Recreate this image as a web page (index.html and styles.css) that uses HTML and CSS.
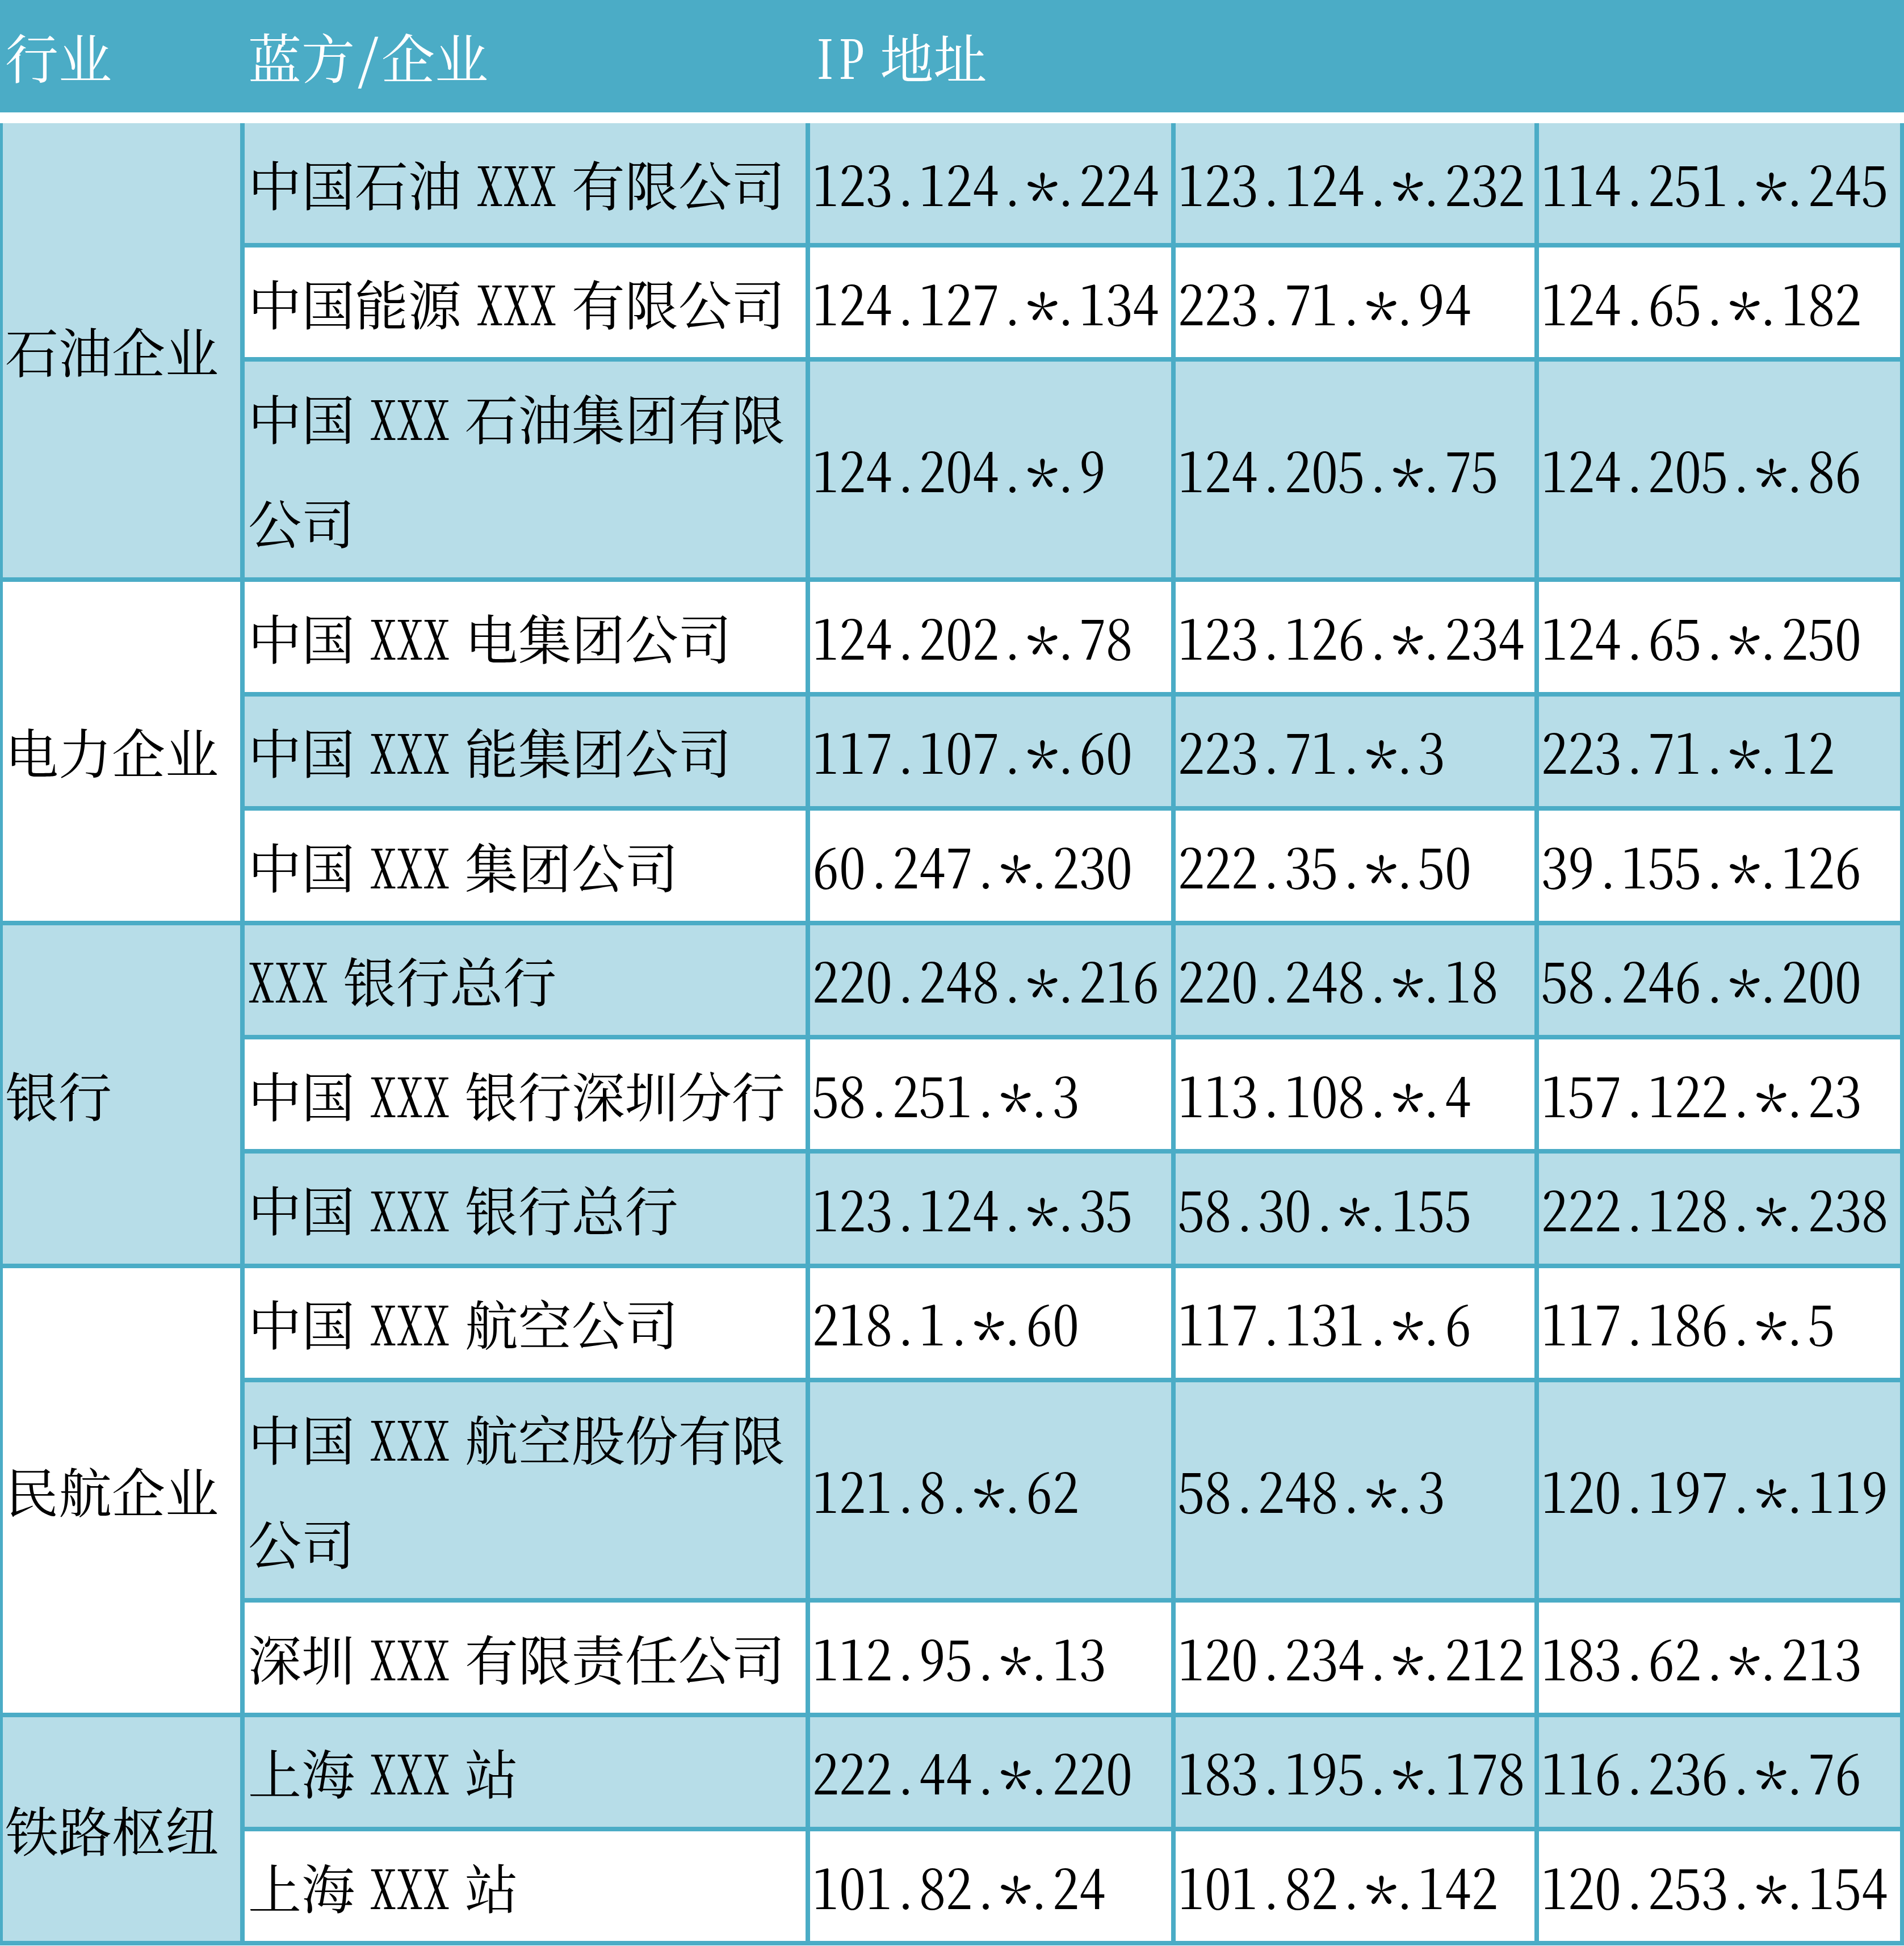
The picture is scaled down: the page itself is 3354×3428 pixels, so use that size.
FILE: index.html
```html
<!DOCTYPE html>
<html lang="zh-CN">
<head>
<meta charset="utf-8">
<title>IP 地址表</title>
<link rel="stylesheet" href="styles.css">
</head>
<body>
<div class="head">
  <div class="hcell">行业</div>
  <div class="hcell co-h">蓝方/企业</div>
  <div class="hcell ip-h">IP 地址</div>
</div>
<div class="sheet">
  <div class="cell grp tint span3">石油企业</div>
  <div class="cell co tint">中国石油 XXX 有限公司</div>
  <div class="cell ip tint"><span>123.124.<span class="star">*</span>.224</span></div>
  <div class="cell ip tint"><span>123.124.<span class="star">*</span>.232</span></div>
  <div class="cell ip tint"><span>114.251.<span class="star">*</span>.245</span></div>

  <div class="cell co">中国能源 XXX 有限公司</div>
  <div class="cell ip"><span>124.127.<span class="star">*</span>.134</span></div>
  <div class="cell ip"><span>223.71.<span class="star">*</span>.94</span></div>
  <div class="cell ip"><span>124.65.<span class="star">*</span>.182</span></div>

  <div class="cell co tint">中国 XXX 石油集团有限<br>公司</div>
  <div class="cell ip tint"><span>124.204.<span class="star">*</span>.9</span></div>
  <div class="cell ip tint"><span>124.205.<span class="star">*</span>.75</span></div>
  <div class="cell ip tint"><span>124.205.<span class="star">*</span>.86</span></div>

  <div class="cell grp span3">电力企业</div>
  <div class="cell co">中国 XXX 电集团公司</div>
  <div class="cell ip"><span>124.202.<span class="star">*</span>.78</span></div>
  <div class="cell ip"><span>123.126.<span class="star">*</span>.234</span></div>
  <div class="cell ip"><span>124.65.<span class="star">*</span>.250</span></div>

  <div class="cell co tint">中国 XXX 能集团公司</div>
  <div class="cell ip tint"><span>117.107.<span class="star">*</span>.60</span></div>
  <div class="cell ip tint"><span>223.71.<span class="star">*</span>.3</span></div>
  <div class="cell ip tint"><span>223.71.<span class="star">*</span>.12</span></div>

  <div class="cell co">中国 XXX 集团公司</div>
  <div class="cell ip"><span>60.247.<span class="star">*</span>.230</span></div>
  <div class="cell ip"><span>222.35.<span class="star">*</span>.50</span></div>
  <div class="cell ip"><span>39.155.<span class="star">*</span>.126</span></div>

  <div class="cell grp tint span3">银行</div>
  <div class="cell co tint">XXX 银行总行</div>
  <div class="cell ip tint"><span>220.248.<span class="star">*</span>.216</span></div>
  <div class="cell ip tint"><span>220.248.<span class="star">*</span>.18</span></div>
  <div class="cell ip tint"><span>58.246.<span class="star">*</span>.200</span></div>

  <div class="cell co">中国 XXX 银行深圳分行</div>
  <div class="cell ip"><span>58.251.<span class="star">*</span>.3</span></div>
  <div class="cell ip"><span>113.108.<span class="star">*</span>.4</span></div>
  <div class="cell ip"><span>157.122.<span class="star">*</span>.23</span></div>

  <div class="cell co tint">中国 XXX 银行总行</div>
  <div class="cell ip tint"><span>123.124.<span class="star">*</span>.35</span></div>
  <div class="cell ip tint"><span>58.30.<span class="star">*</span>.155</span></div>
  <div class="cell ip tint"><span>222.128.<span class="star">*</span>.238</span></div>

  <div class="cell grp span3">民航企业</div>
  <div class="cell co">中国 XXX 航空公司</div>
  <div class="cell ip"><span>218.1.<span class="star">*</span>.60</span></div>
  <div class="cell ip"><span>117.131.<span class="star">*</span>.6</span></div>
  <div class="cell ip"><span>117.186.<span class="star">*</span>.5</span></div>

  <div class="cell co tint">中国 XXX 航空股份有限<br>公司</div>
  <div class="cell ip tint"><span>121.8.<span class="star">*</span>.62</span></div>
  <div class="cell ip tint"><span>58.248.<span class="star">*</span>.3</span></div>
  <div class="cell ip tint"><span>120.197.<span class="star">*</span>.119</span></div>

  <div class="cell co">深圳 XXX 有限责任公司</div>
  <div class="cell ip"><span>112.95.<span class="star">*</span>.13</span></div>
  <div class="cell ip"><span>120.234.<span class="star">*</span>.212</span></div>
  <div class="cell ip"><span>183.62.<span class="star">*</span>.213</span></div>

  <div class="cell grp tint span2">铁路枢纽</div>
  <div class="cell co tint">上海 XXX 站</div>
  <div class="cell ip tint"><span>222.44.<span class="star">*</span>.220</span></div>
  <div class="cell ip tint"><span>183.195.<span class="star">*</span>.178</span></div>
  <div class="cell ip tint"><span>116.236.<span class="star">*</span>.76</span></div>

  <div class="cell co">上海 XXX 站</div>
  <div class="cell ip"><span>101.82.<span class="star">*</span>.24</span></div>
  <div class="cell ip"><span>101.82.<span class="star">*</span>.142</span></div>
  <div class="cell ip"><span>120.253.<span class="star">*</span>.154</span></div>
</div>
</body>
</html>
```

FILE: styles.css
```css
html, body {
  margin: 0;
  padding: 0;
  background: #ffffff;
}

body {
  width: 3354px;
  font-family: "Noto Serif CJK SC", "Noto Sans CJK SC", serif;
  font-size: 94px;
  color: #000000;
  font-feature-settings: "hwid" 1;
  word-spacing: -0.22em;
}

.head {
  height: 198px;
  background: #4bacc6;
  display: grid;
  grid-template-columns: 418px 988px 1fr;
  column-gap: 8px;
  padding-left: 5px;
  margin-bottom: 19px;
  color: #ffffff;
  align-items: center;
}

.hcell {
  padding-left: 4px;
  line-height: 184px;
  white-space: nowrap;
}

.co-h {
  padding-left: 6px;
}

.ip-h {
  padding-left: 3px;
}

.sheet {
  display: grid;
  grid-template-columns: 418px 988px 636px 632px 636px;
  grid-template-rows: 211px 193.4px 380px repeat(7, 193.4px) 380px repeat(3, 193.4px);
  gap: 8px;
  padding: 0 7px 8px 5px;
  background: #4bacc6;
}

.cell {
  background: #ffffff;
  display: flex;
  align-items: center;
  line-height: 184px;
  white-space: nowrap;
}

.tint {
  background: #b7dde8;
}

.span3 {
  grid-row: span 3;
}

.span2 {
  grid-row: span 2;
}

.grp {
  padding-left: 4px;
}

.co {
  padding-left: 6px;
}

.ip {
  padding-left: 4px;
}

.star {
  font-size: 1.25em;
  letter-spacing: -0.1em;
  line-height: 0;
  vertical-align: -0.33em;
}
```
